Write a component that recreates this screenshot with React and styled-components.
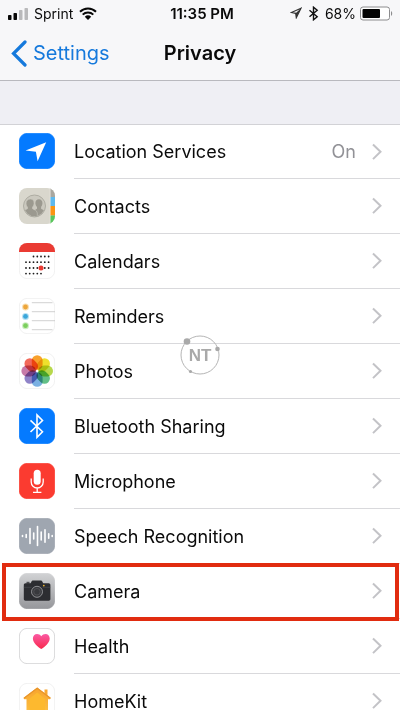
import React from 'react';
import styled, { createGlobalStyle } from 'styled-components';

const GlobalStyle = createGlobalStyle`
  body {
    margin: 0;
    background: #fff;
    color: #0a0a0a;
    font-family: Inter, "Liberation Sans", sans-serif;
  }

  * {
    box-sizing: border-box;
  }
`;

const Page = styled.div`
  position: relative;
  height: 100vh;
  overflow: hidden;
`;

const Header = styled.header`
  background: #f7f7f9;
  border-bottom: 1px solid #b9b9be;
`;

const StatusBar = styled.div`
  display: grid;
  grid-template-columns: 1fr auto 1fr;
  align-items: center;
  height: 26px;
  padding: 0 7px;
`;

const StatusGroup = styled.div`
  display: flex;
  align-items: center;
  justify-content: ${props => props.$end ? 'flex-end' : 'flex-start'};
  gap: ${props => props.$end ? '4px' : '6px'};
  font-size: 14px;
`;

const Time = styled.div`
  padding-left: 4px;
  font-size: 15px;
  font-weight: 600;
`;

const NavBar = styled.nav`
  display: grid;
  grid-template-columns: 1fr auto 1fr;
  align-items: center;
  height: 54px;
  padding: 0 11px;
`;

const BackLink = styled.a`
  display: flex;
  align-items: center;
  gap: 6px;
  color: #1579dc;
  font-size: 20px;
  text-decoration: none;
`;

const Title = styled.h1`
  margin: 0;
  font-size: 20px;
  font-weight: 600;
`;

const SectionGap = styled.div`
  height: 43px;
  background: #efeff4;
`;

const List = styled.ul`
  margin: 0;
  padding: 0;
  list-style: none;
`;

const Item = styled.li`
  position: relative;
  height: 55px;

  &:first-child {
    border-top: 1px solid #d2d2d6;
  }
`;

const RowLink = styled.a`
  display: flex;
  align-items: center;
  gap: 19px;
  height: 100%;
  padding-left: 19px;
  color: inherit;
  text-decoration: none;

  > svg {
    flex: none;
    margin-bottom: 2px;
  }
`;

const RowBody = styled.div`
  display: flex;
  align-items: center;
  flex: 1;
  height: 100%;
  padding-right: 18px;
  border-bottom: 1px solid #d9d9dc;
  font-size: 18px;
`;

const Label = styled.span`
  flex: 1;
`;

const Value = styled.span`
  margin-right: 16px;
  color: #929297;
`;

const Highlight = styled.div`
  position: absolute;
  inset: -1px 1px -2px 2px;
  border: 4px solid #e12c10;
  pointer-events: none;
`;

const Watermark = styled.svg`
  position: absolute;
  top: 50%;
  left: 50%;
  transform: translate(-50%, -50%);
  pointer-events: none;
`;

const Tile = ({ fill = '#fff', stroke, children }) => (
  <svg width="36" height="36" viewBox="0 0 36 36" aria-hidden="true">
    <rect x="0.4" y="0.4" width="35.2" height="35.2" rx="7.6" fill={fill} stroke={stroke || fill} strokeWidth="0.8" />
    {children}
  </svg>
);

const LocationIcon = () => (
  <Tile fill="#047aff">
    <path d="M27.2 9.2 6.6 17.4l10.3 1.4 1.7 9.4z" fill="#fff" />
  </Tile>
);

const ContactsIcon = () => (
  <svg width="36" height="36" viewBox="0 0 36 36" aria-hidden="true">
    <clipPath id="contacts-tile"><rect width="36" height="36" rx="8" /></clipPath>
    <g clipPath="url(#contacts-tile)">
      <rect width="36" height="36" fill="#d9d7cd" />
      <path d="M31 0h5v9h-5z" fill="#a9a79f" />
      <path d="M31 9h5v9h-5z" fill="#5db9ee" />
      <path d="M31 18h5v9.5h-5z" fill="#fb9413" />
      <path d="M31 27.5h5V36h-5z" fill="#58c75c" />
      <path d="M31.2 0v36" stroke="#efeee8" strokeWidth="0.7" />
    </g>
    <clipPath id="contacts-disc"><circle cx="15.5" cy="18" r="10.3" /></clipPath>
    <circle cx="15.5" cy="18" r="11" fill="#cbc9bf" stroke="#a5a399" strokeWidth="0.8" />
    <g clipPath="url(#contacts-disc)" fill="#9b998f">
      <path d="M20 11.2c2.400 0 3.600 2 3.400 4.400-.2 1.900-.8 2.700-1.300 3.400v1.700c1.200.9 3.500 1.300 4.600 2.900V30H16v-8l2-1.300V19c-.8-.8-1.500-1.900-1.600-3.500-.2-2.400 1.200-4.300 3.600-4.300z" />
      <path d="M11.500 11c2.400 0 3.700 1.900 3.500 4.400-.1 1.800-.8 2.900-1.500 3.600v1.700c1.300 1 4.400 1.300 4.800 4.300V30H3v-6c1-2.200 4-2.200 5.500-3.300V19c-.8-.9-1.300-1.900-1.400-3.600-.2-2.500 1.600-4.400 4.400-4.400z" stroke="#cbc9bf" strokeWidth="0.6" />
    </g>
  </svg>
);

const calendarCols = [7, 10.7, 14.5, 18.3, 22, 25.8, 29.6];
const calendarRows = [
  { y: 13.5, from: 2, to: 6 },
  { y: 19.2, from: 0, to: 6 },
  { y: 25, from: 0, to: 6 },
  { y: 30.6, from: 0, to: 4 },
];

const CalendarIcon = () => (
  <Tile stroke="#eee">
    <path d="M0 9V8a8 8 0 0 1 8-8h20a8 8 0 0 1 8 8v1z" fill="#ea3b33" />
    {calendarRows.map(row => calendarCols.slice(row.from, row.to + 1).map(x => (
      <circle key={`${row.y}-${x}`} cx={x} cy={row.y} r="0.9" fill="#1c1c1c" />
    )))}
    <circle cx="22" cy="25" r="2.5" fill="#ea3b33" />
  </Tile>
);

const reminders = [
  { y: 9, color: '#eda63a', halo: '#f9dfb3' },
  { y: 18.4, color: '#3ba7da', halo: '#b5dff2' },
  { y: 27.7, color: '#7bcf5d', halo: '#cdeec0' },
];

const RemindersIcon = () => (
  <Tile stroke="#eee">
    <path d="M12.800 4.700H33.500M12.800 13.700H36M12.800 22.700H36M12.800 31.700H33.500" stroke="#bdbdbd" strokeWidth="0.7" />
    {reminders.map(dot => (
      <g key={dot.y}>
        <circle cx="6.5" cy={dot.y} r="3.5" fill={dot.halo} />
        <circle cx="6.5" cy={dot.y} r="2.4" fill={dot.color} />
      </g>
    ))}
  </Tile>
);

const petals = ['#f8a12c', '#efe02c', '#b7d84c', '#62bf87', '#7ab0e2', '#8f83c8', '#c77aa9', '#f2695a'];

const PhotosIcon = () => (
  <Tile stroke="#eee">
    <g style={{ isolation: 'isolate' }}>
      {petals.map((color, i) => (
        <rect
          key={color}
          x="12.8"
          y="2.2"
          width="10.8"
          height="14.6"
          rx="5.4"
          fill={color}
          transform={`rotate(${i * 45} 18.2 18)`}
          style={{ mixBlendMode: 'multiply' }}
        />
      ))}
    </g>
  </Tile>
);

const BluetoothIcon = () => (
  <Tile fill="#047aff">
    <path d="M11.500 12.300 23.500 23.700 18 29.300V7l5.500 5.500L11.500 24" fill="none" stroke="#fff" strokeWidth="1.6" />
  </Tile>
);

const MicrophoneIcon = () => (
  <Tile fill="#fb3b30">
    <rect x="14.7" y="6.8" width="7" height="15" rx="3.5" fill="#fff" />
    <path d="M12.200 15.500v3.500a6 6 0 0 0 12 0v-3.500M18.200 25v4.300M14 29.300h8.400" fill="none" stroke="#fff" strokeWidth="1.3" />
  </Tile>
);

const SpeechIcon = () => (
  <Tile fill="#9fa6b0">
    <path
      d="M3.500 17.500v1M7.200 16.500v3M11 10.500v15M14.700 15v6M18.500 8.500v19M22.200 14v8M26 11.800v12.400M29.700 15.800v4.400M33.200 17.500v1"
      stroke="#fff"
      strokeWidth="1.6"
      strokeLinecap="round"
    />
  </Tile>
);

const CameraIcon = () => (
  <Tile fill="url(#camera-tile)">
    <linearGradient id="camera-tile" x2="0" y2="1">
      <stop stopColor="#d1d2d4" />
      <stop offset="1" stopColor="#96979b" />
    </linearGradient>
    <path d="M7.500 8.800h3v2h-3z" fill="#4b4c50" />
    <path d="M6.500 10.300h4.300c.9 0 1.100-.7 1.500-1.400.4-.8.800-1.400 1.700-1.400h7.800c.9 0 1.300.6 1.700 1.400.4.700.6 1.400 1.500 1.400h4.700c1 0 1.700.7 1.700 1.700v14c0 1-.7 1.700-1.700 1.700H6.500c-1 0-1.700-.7-1.700-1.700V12c0-1 .7-1.700 1.700-1.700z" fill="#2c2d31" />
    <path d="M4.800 14.300h26.600" stroke="#55565a" strokeWidth="0.5" />
    <circle cx="18" cy="18.8" r="7" fill="#2c2d31" />
    <circle cx="18" cy="18.8" r="5.5" fill="#38393d" stroke="#97989c" strokeWidth="0.9" />
    <circle cx="18" cy="18.8" r="3.3" fill="none" stroke="#68696d" strokeWidth="0.5" />
    <circle cx="24.8" cy="12.6" r="0.9" fill="#e9b431" />
  </Tile>
);

const HealthIcon = () => (
  <Tile stroke="#cfcfd1">
    <linearGradient id="health-heart" x2="0" y2="1">
      <stop stopColor="#fb5aa5" />
      <stop offset="1" stopColor="#f8294b" />
    </linearGradient>
    <path d="M22.300 8.200c1.100-1.500 2.500-2.300 4.200-2.300 2.500 0 4.200 2 4.200 4.500 0 4.700-5.200 8.200-8.400 10.700-3.200-2.500-8.400-6-8.400-10.700 0-2.500 1.700-4.500 4.200-4.500 1.700 0 3.100.8 4.200 2.300z" fill="url(#health-heart)" />
  </Tile>
);

const HomeKitIcon = () => (
  <Tile stroke="#eee">
    <linearGradient id="homekit-house" x2="0" y2="1">
      <stop stopColor="#f7a32d" />
      <stop offset="1" stopColor="#fcc044" />
    </linearGradient>
    <path d="M18.200 4.500 25.500 10V6.500h3v5.800l3.300 2.600-.9 1.400H29V30H7.500V16.300H5.300l-.9-1.400z" fill="url(#homekit-house)" />
    <path d="M18.200 9.500 26 15.800V27H10.500V15.800z" fill="#fdb92f" />
    <path d="m5 15.300 13.200-10 13.200 10" fill="none" stroke="#e8942b" strokeWidth="1.1" />
  </Tile>
);

const Chevron = () => (
  <svg width="10" height="18" viewBox="0 0 10 18" aria-hidden="true">
    <path d="m1 1.500 7.500 7.300L1 16.100" fill="none" stroke="#c3c3c7" strokeWidth="2" />
  </svg>
);

const SignalIcon = () => (
  <svg width="21" height="13" viewBox="0 0 21 13" aria-hidden="true">
    <rect x="1" y="8" width="3.5" height="5" rx="0.8" fill="#080808" />
    <rect x="6.5" y="6" width="3.5" height="7" rx="0.8" fill="#080808" />
    <rect x="12" y="3" width="3.5" height="10" rx="0.8" fill="#b9b9bb" />
    <rect x="17.5" y="1" width="3.5" height="12" rx="0.8" fill="#b9b9bb" />
  </svg>
);

const WifiIcon = () => (
  <svg width="18" height="13" viewBox="0 0 18 13" aria-hidden="true">
    <path d="M1 4.700a11.500 11.500 0 0 1 16 0M3.700 7.600a7.600 7.600 0 0 1 10.600 0" fill="none" stroke="#080808" strokeWidth="2" />
    <path d="M5.800 9.700a4.700 4.700 0 0 1 6.400 0L9 12.900z" fill="#080808" />
  </svg>
);

const ArrowIcon = () => (
  <svg width="12" height="12" viewBox="0 0 12 12" aria-hidden="true">
    <path d="M11 1.200 1.400 5.500l4.300.8.600 4.400z" fill="none" stroke="#333" strokeWidth="1.2" />
    <path d="M11 1.200 5.700 6.300l.6 4.400z" fill="#333" />
  </svg>
);

const BluetoothGlyph = () => (
  <svg width="15" height="15" viewBox="0 0 15 15" aria-hidden="true">
    <path d="m3.500 4.300 7.700 6.500-3.700 3V1.200l3.700 3-7.700 6.600" fill="none" stroke="#111" strokeWidth="1.4" />
  </svg>
);

const BatteryIcon = () => (
  <svg width="33" height="15" viewBox="0 0 33 15" aria-hidden="true">
    <rect x="0.5" y="1" width="29" height="13" rx="2.5" fill="#fff" stroke="#8c8c8e" />
    <rect x="2.5" y="3" width="17.5" height="9" rx="1" fill="#050505" />
    <path d="M31 5c1.600.8 1.600 4.200 0 5z" fill="#8c8c8e" />
  </svg>
);

const items = [
  { label: 'Location Services', icon: LocationIcon, value: 'On' },
  { label: 'Contacts', icon: ContactsIcon },
  { label: 'Calendars', icon: CalendarIcon },
  { label: 'Reminders', icon: RemindersIcon },
  { label: 'Photos', icon: PhotosIcon },
  { label: 'Bluetooth Sharing', icon: BluetoothIcon },
  { label: 'Microphone', icon: MicrophoneIcon },
  { label: 'Speech Recognition', icon: SpeechIcon },
  { label: 'Camera', icon: CameraIcon, highlighted: true },
  { label: 'Health', icon: HealthIcon },
  { label: 'HomeKit', icon: HomeKitIcon },
];

function App() {
  return (
    <Page>
      <GlobalStyle />
      <Header>
        <StatusBar>
          <StatusGroup>
            <SignalIcon />
            <span>Sprint</span>
            <WifiIcon />
          </StatusGroup>
          <Time>11:35 PM</Time>
          <StatusGroup $end>
            <ArrowIcon />
            <BluetoothGlyph />
            <span>68%</span>
            <BatteryIcon />
          </StatusGroup>
        </StatusBar>
        <NavBar>
          <BackLink href="#settings">
            <svg width="16" height="27" viewBox="0 0 16 27" aria-hidden="true">
              <path d="M14 2 2.500 13.500 14 25" fill="none" stroke="#1579dc" strokeWidth="3.2" strokeLinecap="round" />
            </svg>
            Settings
          </BackLink>
          <Title>Privacy</Title>
        </NavBar>
      </Header>
      <main>
        <SectionGap />
        <List>
          {items.map(({ label, icon: Icon, value, highlighted }) => (
            <Item key={label}>
              <RowLink href={`#${label.toLowerCase().replace(' ', '-')}`}>
                <Icon />
                <RowBody>
                  <Label>{label}</Label>
                  {value && <Value>{value}</Value>}
                  <Chevron />
                </RowBody>
              </RowLink>
              {highlighted && <Highlight />}
            </Item>
          ))}
        </List>
      </main>
      <Watermark width="42" height="42" viewBox="0 0 42 42">
        <circle cx="21" cy="21" r="19" fill="none" stroke="#b5b5b5" />
        <circle cx="8" cy="7.5" r="3.3" fill="#a9a9a9" />
        <circle cx="38.5" cy="15" r="2.3" fill="#a9a9a9" />
        <circle cx="11.5" cy="37.5" r="1.6" fill="#a9a9a9" />
        <text x="21" y="27" textAnchor="middle" fontFamily="Liberation Sans, sans-serif" fontSize="17" fontWeight="700" fill="#a9a9a9">NT</text>
      </Watermark>
    </Page>
  );
}

export default App;
